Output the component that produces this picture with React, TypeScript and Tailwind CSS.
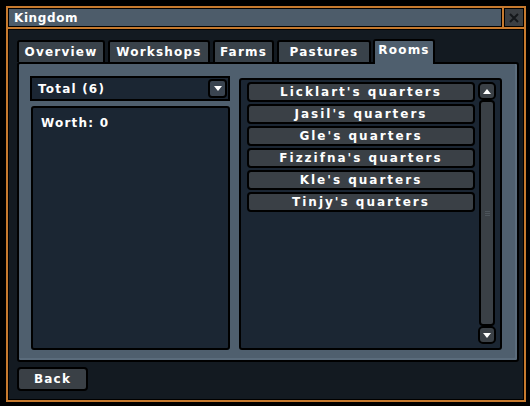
import React from "react";

const font = { fontFamily: '"DejaVu Sans", "Liberation Sans", sans-serif' };

const tabs = [
  { name: "Overview", w: "w-[88px]" },
  { name: "Workshops", w: "w-[102px]" },
  { name: "Farms", w: "w-[61px]" },
  { name: "Pastures", w: "w-[94px]" },
];

const rooms = [
  "Licklart's quarters",
  "Jasil's quarters",
  "Gle's quarters",
  "Fizzifna's quarters",
  "Kle's quarters",
  "Tinjy's quarters",
];

function Triangle({ up }: { up?: boolean }) {
  return (
    <svg width="8" height="5" viewBox="0 0 8 5">
      {up ? <polygon points="0,5 4,0 8,5" fill="#fff" /> : <polygon points="0,0 8,0 4,5" fill="#fff" />}
    </svg>
  );
}

export default function App() {
  return (
    <div
      className="w-[530px] h-[406px] bg-black pt-[6px] pl-[6px] text-white font-bold text-[12px] tracking-[1.2px]"
      style={font}
    >
      <div className="w-[520px] h-[396px] bg-[#c77a2e] p-[2px] flex flex-col gap-[2px]">
        <div className="flex gap-[2px] h-[19px]">
          <div className="flex-1 bg-[#4d5c6a] border border-black flex items-center pl-[5px] leading-none tracking-[0.6px]">
            Kingdom
          </div>
          <div className="w-[20px] bg-[#3b3f43] border border-black flex items-center justify-center">
            <svg width="10" height="10" viewBox="0 0 10 10">
              <path d="M1 1 L9 9 M9 1 L1 9" stroke="#15181b" strokeWidth="2" />
            </svg>
          </div>
        </div>

        <div className="flex-1 bg-[#131a21] border border-black pl-[8px] pt-[7px] flex flex-col">
          <div className="flex items-end gap-[3px] h-[25px]">
            {tabs.map((t) => (
              <div
                key={t.name}
                className={`${t.w} h-[22px] bg-[#39424a] border-2 border-b-0 border-black rounded-t-[3px] flex items-center justify-center leading-none`}
              >
                {t.name}
              </div>
            ))}
            <div className="w-[62px] -ml-[1px] h-[25px] bg-[#4f5f6e] border-2 border-b-0 border-black rounded-t-[3px] flex items-start justify-center pt-[3px] leading-none relative z-10 -mb-[2px] pb-[2px]">
              Rooms
            </div>
          </div>

          <div className="w-[502px] h-[300px] bg-[#4f5f6e] border-2 border-black rounded-[3px] shadow-[inset_-2px_-2px_0_#5b6c7c] flex items-start pl-[11px] pt-[12px] gap-[9px]">
            <div className="w-[200px] h-[274px] flex flex-col gap-[5px]">
              <div className="h-[25px] bg-[#1b2633] border-2 border-black flex items-center justify-between pl-[6px] pr-[1px]">
                <span className="leading-none">Total (6)</span>
                <div className="w-[19px] h-[19px] bg-[#3a4450] border-2 border-black rounded-[4px] flex items-center justify-center">
                  <Triangle />
                </div>
              </div>
              <div className="flex-1 bg-[#1b2633] border-2 border-black rounded-[3px] ml-[1px] pl-[8px] pt-[9px] leading-none">
                Worth: 0
              </div>
            </div>

            <div className="mt-[2px] w-[263px] h-[272px] bg-[#1b2633] border-2 border-black rounded-[3px] flex pt-[2px] pl-[6px] pr-[4px] pb-[4px] gap-[3px]">
              <div className="w-[228px] flex flex-col gap-[2px]">
                {rooms.map((r) => (
                  <div
                    key={r}
                    className="h-[20px] bg-[#3a4046] border-2 border-black rounded-[4px] flex items-center justify-center leading-none tracking-[2px]"
                  >
                    {r}
                  </div>
                ))}
              </div>
              <div className="w-[18px] flex flex-col">
                <div className="h-[18px] bg-[#3a4046] border-2 border-black rounded-[5px] flex items-center justify-center">
                  <Triangle up />
                </div>
                <div className="flex-1 mx-[1px] bg-[#3a4046] border-2 border-black rounded-[4px] flex items-center justify-center">
                  <div className="flex flex-col gap-[1px]">
                    <div className="w-[5px] h-[1px] bg-[#4c545b]" />
                    <div className="w-[5px] h-[1px] bg-[#4c545b]" />
                    <div className="w-[5px] h-[1px] bg-[#4c545b]" />
                  </div>
                </div>
                <div className="h-[18px] bg-[#3a4046] border-2 border-black rounded-[5px] flex items-center justify-center">
                  <Triangle />
                </div>
              </div>
            </div>
          </div>

          <div className="mt-[5px] w-[71px] h-[24px] bg-[#3a4046] border-2 border-black rounded-[4px] flex items-center justify-center leading-none">
            Back
          </div>
        </div>
      </div>
    </div>
  );
}
